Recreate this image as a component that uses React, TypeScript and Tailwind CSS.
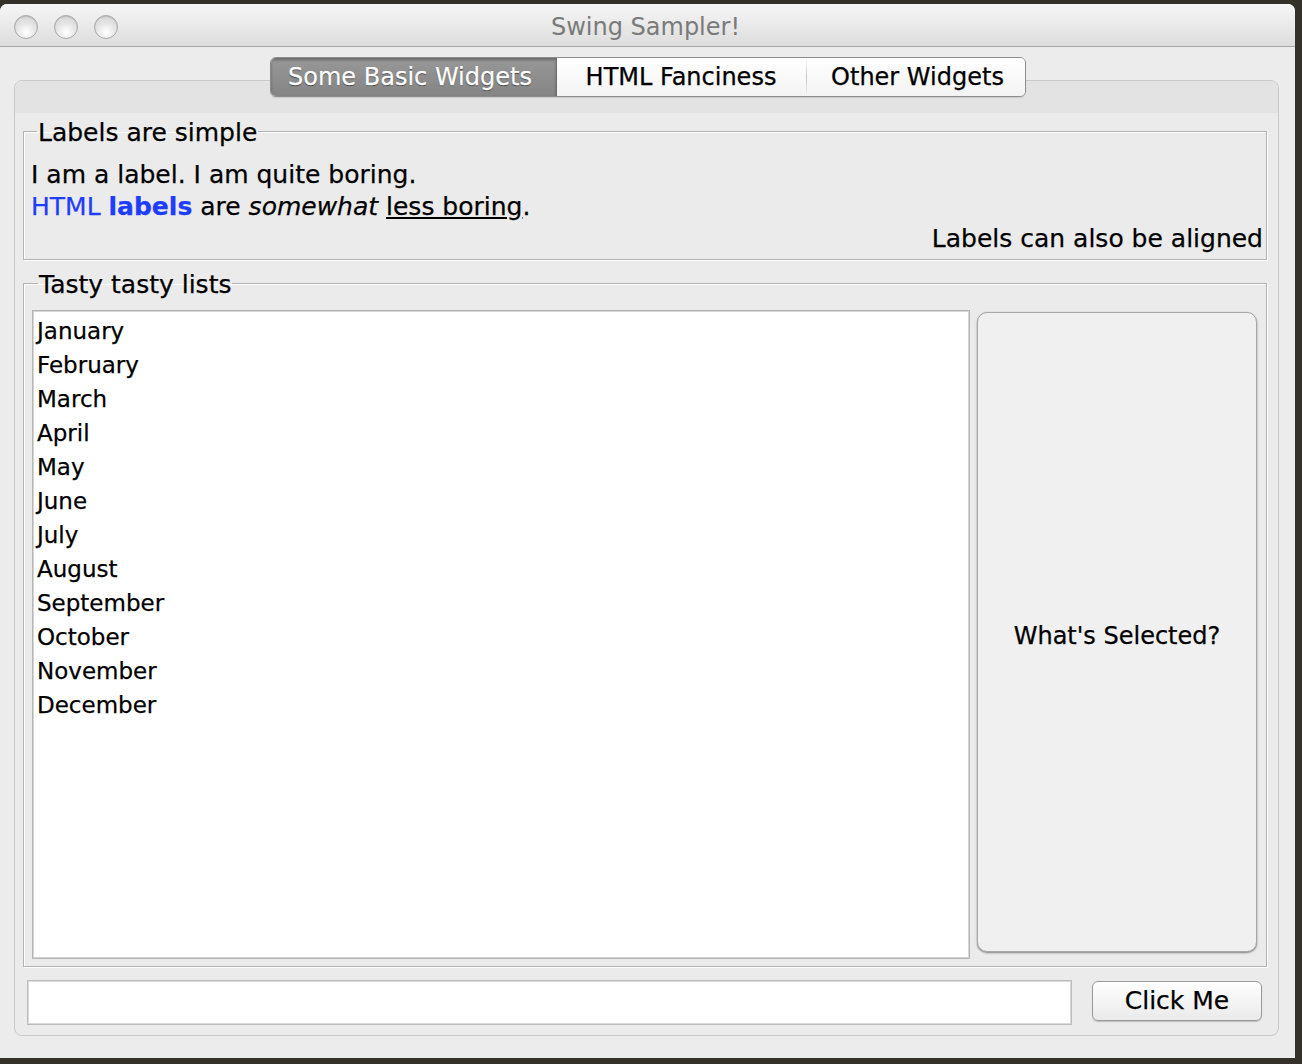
const months = [
  'January',
  'February',
  'March',
  'April',
  'May',
  'June',
  'July',
  'August',
  'September',
  'October',
  'November',
  'December',
];

function TrafficLight() {
  return (
    <div className="w-[24px] h-[24px] rounded-full border border-[#a9a9a9] bg-[radial-gradient(circle_at_50%_75%,#ffffff,#e2e2e2_55%,#cfcfcf)] shadow-[inset_0_1px_1px_rgba(0,0,0,0.12)]" />
  );
}

export default function App() {
  return (
    <div className="w-[1302px] h-[1064px] overflow-hidden bg-[#34312b] pt-[4px] font-['DejaVu_Sans',sans-serif] text-black [-webkit-text-stroke:0.25px_currentColor]">
      <div className="w-[1295px] h-[1054px] rounded-t-[7px] overflow-hidden bg-[#ececec] flex flex-col">
        {/* title bar */}
        <div className="h-[43px] shrink-0 pt-[3px] grid grid-cols-[1fr_auto_1fr] items-center border-b border-[#a6a6a6] bg-gradient-to-b from-[#f6f6f6] to-[#dddddd]">
          <div className="flex items-center gap-[16px] pl-[14px]">
            <TrafficLight />
            <TrafficLight />
            <TrafficLight />
          </div>
          <div className="text-[24px] text-[#7a7a7a] -ml-[4px] [-webkit-text-stroke:0]">Swing Sampler!</div>
          <div />
        </div>

        {/* body */}
        <div className="pt-[10px]">
          <div className="relative z-10 flex justify-center">
            <div className="flex h-[40px] rounded-[6px] border border-[#8e8e8e] overflow-hidden shadow-[0_1px_1px_rgba(0,0,0,0.12)] text-[24px]">
              <div className="w-[286px] pl-[2px] pr-[8px] flex items-center justify-center border-r border-[#6e6e6e] bg-gradient-to-b from-[#989898] to-[#858585] text-white shadow-[inset_0_2px_3px_rgba(0,0,0,0.3)] [text-shadow:0_1px_1px_rgba(0,0,0,0.55)]">
                Some Basic Widgets
              </div>
              <div className="w-[249px] flex items-center justify-center bg-gradient-to-b from-white to-[#f3f3f3]">
                HTML Fanciness
              </div>
              <div className="w-[1px] bg-gradient-to-b from-white via-[#c6c6c6] to-[#f3f3f3]" />
              <div className="w-[218px] pl-[4px] flex items-center justify-center bg-gradient-to-b from-white to-[#f3f3f3]">
                Other Widgets
              </div>
            </div>
          </div>

          <div className="ml-[14px] -mt-[17px] w-[1265px] h-[956px] rounded-[8px] border border-[#c9c9c9] bg-[#ebebeb] overflow-hidden flex flex-col">
            <div className="h-[32px] shrink-0 bg-[#e3e3e3]" />
            <div className="pl-[8px] pr-[11px] pt-[3px] flex flex-col">
              <fieldset className="border border-[#b3b3b3] shadow-[1px_1px_0_#ffffff,inset_1px_1px_0_#ffffff] pl-[7px] pr-[3px] pt-[13px] pb-[4px] text-[25px] leading-[32px]">
                <legend className="ml-[6px] px-[1px] leading-[30px]">
                  <span className="relative top-[2px]">Labels are simple</span>
                </legend>
                <div>I am a label. I am quite boring.</div>
                <div>
                  <span className="text-[#1f3dff]">
                    HTML <b>labels</b>
                  </span>{' '}
                  are <i>somewhat</i> <u>less boring</u>.
                </div>
                <div className="text-right">Labels can also be aligned</div>
              </fieldset>

              <fieldset className="mt-[8px] border border-[#b3b3b3] shadow-[1px_1px_0_#ffffff,inset_1px_1px_0_#ffffff] pl-[8px] pr-[9px] pt-[12px] pb-[7px]">
                <legend className="ml-[6px] px-[1px] leading-[30px] text-[25px]">
                  <span className="relative top-[2px]">Tasty tasty lists</span>
                </legend>
                <div className="flex gap-[7px]">
                  <div className="flex-1 h-[649px] bg-white border border-[#b5b5b5] shadow-[inset_0_0_0_1px_#d6d6d6] pt-[3px] pl-[4px] text-[23px]">
                    {months.map((m) => (
                      <div key={m} className="h-[34px] leading-[34px]">
                        {m}
                      </div>
                    ))}
                  </div>
                  <button className="w-[280px] mt-[2px] mb-[7px] pt-[8px] rounded-[10px] border border-[#a8a8a8] bg-[#f0f0f0] shadow-[0_1px_2px_rgba(0,0,0,0.45)] text-[24px]">
                    What's Selected?
                  </button>
                </div>
              </fieldset>

              <div className="mt-[13px] flex items-start gap-[20px] pl-[4px] pr-[5px]">
                <div className="flex-1 h-[45px] bg-white border border-[#bcbcbc] shadow-[inset_0_0_0_1px_#dadada]" />
                <button className="w-[170px] h-[40px] mt-[1px] rounded-[6px] border border-[#9a9a9a] bg-gradient-to-b from-white to-[#eaeaea] shadow-[0_1px_1px_rgba(0,0,0,0.2)] text-[25px]">
                  Click Me
                </button>
              </div>
            </div>
          </div>
        </div>
      </div>
    </div>
  );
}
